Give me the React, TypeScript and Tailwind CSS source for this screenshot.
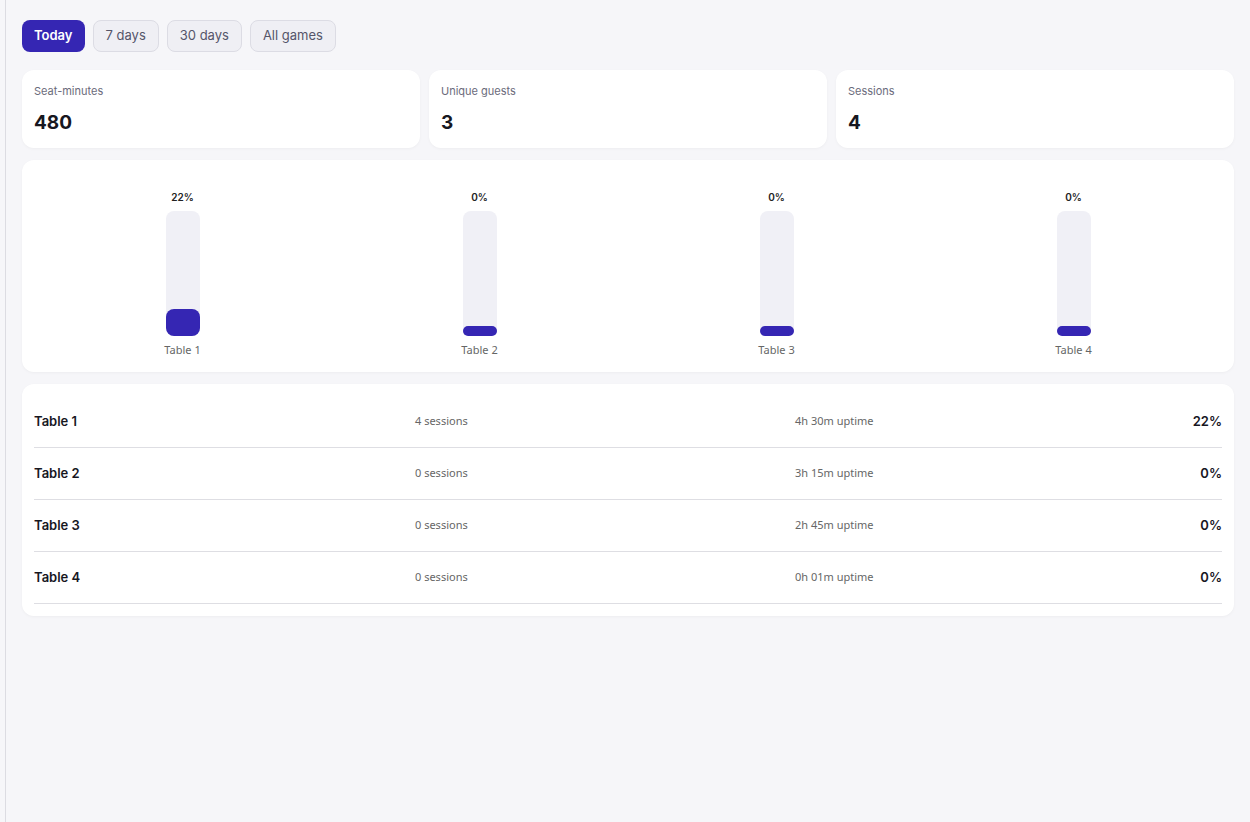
const tables = [
  { name: "Table 1", sessions: "4 sessions", uptime: "4h 30m uptime", pct: 22 },
  { name: "Table 2", sessions: "0 sessions", uptime: "3h 15m uptime", pct: 0 },
  { name: "Table 3", sessions: "0 sessions", uptime: "2h 45m uptime", pct: 0 },
  { name: "Table 4", sessions: "0 sessions", uptime: "0h 01m uptime", pct: 0 },
];

const stats = [
  { label: "Seat-minutes", value: "480" },
  { label: "Unique guests", value: "3" },
  { label: "Sessions", value: "4" },
];

const head = { fontFamily: "Inter, 'Noto Sans', sans-serif" };
const body = { fontFamily: "'Noto Sans', 'Open Sans', sans-serif" };

export default function App() {
  return (
    <div className="min-h-[822px] bg-[#f6f6f9] pl-[5px]" style={head}>
      <div className="min-h-[822px] border-l border-[#dcdce2] px-[16px] pt-[20px]">
        {/* filtros */}
        <div className="flex gap-2">
          <button className="h-[32px] rounded-lg bg-[#3526b3] px-3 text-[13px] font-semibold text-white">Today</button>
          {["7 days", "30 days", "All games"].map((t) => (
            <button key={t} className="h-[32px] rounded-lg border border-[#dcdce4] bg-[#efeff4] px-3 text-[13px] text-[#55556a]">
              {t}
            </button>
          ))}
        </div>

        <div className="mt-[18px] grid grid-cols-3 gap-[9px]">
          {stats.map((s) => (
            <div key={s.label} className="h-[78px] rounded-xl bg-white px-3 pt-[13px] shadow-[0_1px_3px_rgba(0,0,0,0.04)]">
              <div className="text-[11px] text-[#6b6b7b]">{s.label}</div>
              <div className="mt-[9px] text-[19px] font-bold text-[#17171f]">{s.value}</div>
            </div>
          ))}
        </div>

        {/* chart */}
        <div className="mt-[12px] grid h-[212px] grid-cols-4 rounded-xl bg-white px-3 pt-[30px] shadow-[0_1px_3px_rgba(0,0,0,0.04)]">
          {tables.map((t) => (
            <div key={t.name} className="flex flex-col items-center">
              <div className="text-[10px] font-semibold text-[#222]">{t.pct}%</div>
              <div className="mt-[6px] flex h-[125px] w-[34px] flex-col justify-end rounded-lg bg-[#f0f0f6]">
                <div className="rounded-lg bg-[#3526b3]" style={{ height: Math.max(10, (t.pct / 100) * 125) }} />
              </div>
              <div className="mt-[6px] text-[11px] text-[#666]" style={body}>{t.name}</div>
            </div>
          ))}
        </div>

        {/* tabla */}
        <div className="mt-[12px] rounded-xl bg-white px-3 pb-3 pt-[12px] shadow-[0_1px_3px_rgba(0,0,0,0.04)]">
          {tables.map((t) => (
            <div key={t.name} className="grid h-[52px] grid-cols-[381px_380px_1fr_auto] items-center border-b border-[#dedee3]">
              <div className="text-[13px] font-semibold text-[#17171f]">{t.name}</div>
              <div className="text-[11px] text-[#666]" style={body}>{t.sessions}</div>
              <div className="text-[11px] text-[#666]" style={body}>{t.uptime}</div>
              <div className="text-[13px] font-semibold text-[#17171f]">{t.pct}%</div>
            </div>
          ))}
        </div>
      </div>
    </div>
  );
}
